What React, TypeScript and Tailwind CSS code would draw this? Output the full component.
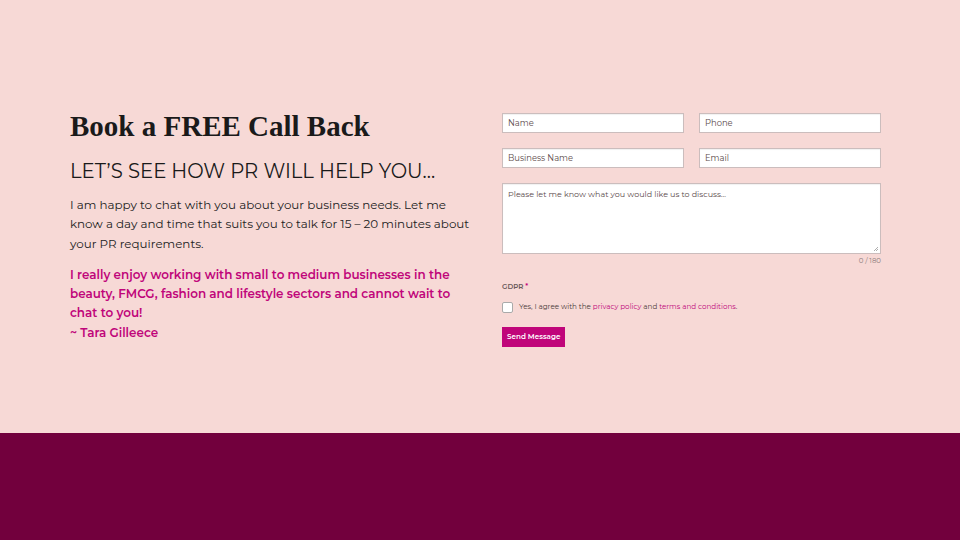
const sans = "font-['Montserrat','Open_Sans',sans-serif]";

export default function App() {
  return (
    <div className={`min-h-[540px] w-[960px] ${sans}`}>
      <section className="flex h-[433px] gap-[24px] bg-[#f7d9d6] pl-[70px] pr-[79px] pt-[110px]">
        <div className="w-[408px]">
          <h1 className="font-['Liberation_Serif',serif] text-[29px] font-bold leading-[32px] text-[#1a1a1a]">
            Book a FREE Call Back
          </h1>
          <h2 className="mt-[17px] text-[19.6px] leading-[24px] text-[#1a1a1a]">
            LET’S SEE HOW PR WILL HELP YOU…
          </h2>
          <p className="mt-[12px] text-[11.9px] leading-[19.3px] text-[#222]">
            I am happy to chat with you about your business needs. Let me know a day and time that suits you to talk
            for 15 – 20 minutes about your PR requirements.
          </p>
          <p className="mt-[12px] text-[11.95px] font-semibold leading-[19.3px] text-[#c0057a]">
            I really enjoy working with small to medium businesses in the beauty, FMCG, fashion and lifestyle sectors
            and cannot wait to chat to you!
            <br />~ Tara Gilleece
          </p>
        </div>

        <form className="flex-1 pt-[3px] text-[#555]">
          <div className="grid grid-cols-2 gap-x-[15px] gap-y-[15px]">
            <Field label="Name" />
            <Field label="Phone" />
            <Field label="Business Name" />
            <Field label="Email" />
          </div>
          <div className="relative mt-[15px] h-[71px] border border-[#cbbdbd] bg-white px-[5px] py-[4px] text-[8px] text-[#5b4a4a] shadow-[inset_0_1px_1px_rgba(0,0,0,0.06)]">
            Please let me know what you would like us to discuss…
            <svg className="absolute bottom-[1px] right-[1px]" width="6" height="6" viewBox="0 0 6 6">
              <path d="M5 1 L1 5 M5 3 L3 5" stroke="#999" strokeWidth="0.8" />
            </svg>
          </div>
          <div className="mt-[2px] text-right text-[7px] text-[#8a7a7a]">0 / 180</div>
          <div className="mt-[15px] text-[7px] font-semibold text-[#6a5a5a]">
            GDPR <span className="text-[#c0057a]">*</span>
          </div>
          <label className="mt-[10px] flex items-center gap-[6px] text-[7.2px] text-[#4a3a3a]">
            <span className="h-[11px] w-[11px] rounded-[2px] border border-[#aaa] bg-white" />
            <span>
              Yes, I agree with the <span className="text-[#c0057a]">privacy policy</span> and{" "}
              <span className="text-[#c0057a]">terms and conditions</span>.
            </span>
          </label>
          <button
            type="button"
            className="mt-[14px] h-[20px] bg-[#c0057a] px-[5px] text-[7.2px] font-semibold text-white"
          >
            Send Message
          </button>
        </form>
      </section>
      <footer className="h-[107px] bg-[#72003d]" />
    </div>
  );
}

function Field({ label }: { label: string }) {
  return (
    <div className="flex h-[20px] items-center border border-[#cbbdbd] bg-white px-[5px] text-[8.4px] text-[#5b4a4a] shadow-[inset_0_1px_1px_rgba(0,0,0,0.06)]">
      {label}
    </div>
  );
}
